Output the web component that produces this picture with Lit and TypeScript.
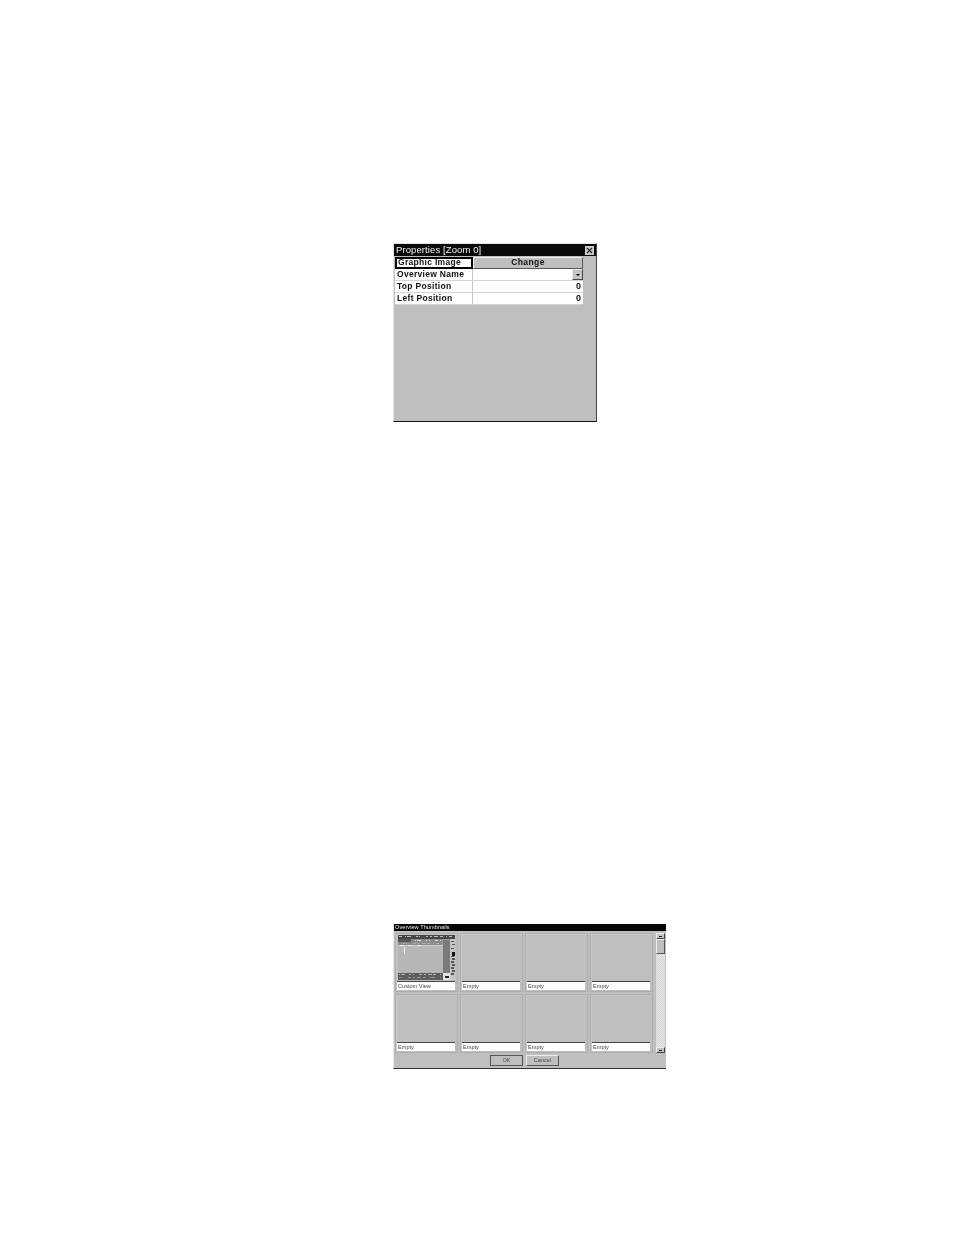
import { LitElement, html, css, svg } from "lit";
import { customElement } from "lit/decorators.js";

const noise = (y: number, x0: number, x1: number, h: number, c: string, seed: number) => {
  const out = [];
  let x = x0, i = seed;
  while (x < x1) {
    const w = 1 + ((i * 7) % 4);
    if (i % 3 !== 0) out.push(svg`<rect x=${x} y=${y} width=${Math.min(w, x1 - x)} height=${h} fill=${c}/>`);
    x += w + ((i * 5) % 3) * 0.5 + 0.5;
    i++;
  }
  return out;
};

@customElement("app-root")
export class AppRoot extends LitElement {
  static styles = css`
    :host { display: block; width: 954px; height: 1235px; background: #fff; overflow: hidden; font-family: "Liberation Sans", Arial, sans-serif; color: #111; }
    .page { display: flex; flex-direction: column; padding: 243px 0 0 393px; }

    .props { box-sizing: border-box; width: 204px; height: 179px; background: #bfbfbf; border-left: 1px solid #e4e4e4; border-top: 1px solid #e4e4e4; border-right: 1px solid #444; border-bottom: 1px solid #111; display: flex; flex-direction: column; filter: blur(0.3px); }
    .props .title { height: 12px; background: #0a0a0a; color: #f2f2f2; font-size: 9.5px; line-height: 12px; padding: 0 0 0 2px; letter-spacing: 0.1px; display: flex; align-items: center; justify-content: space-between; }
    .close { box-sizing: border-box; width: 9px; height: 9px; background: #c8c8c8; margin-right: 2px; display: flex; }
    .close svg { width: 9px; height: 9px; display: block; }
    .table { margin: 1px 0 0 1px; width: 188px; display: flex; flex-direction: column; }
    .row { display: grid; grid-template-columns: 78px 110px; height: 12px; background: #fff; font-size: 8.5px; font-weight: bold; letter-spacing: 0.3px; line-height: 10px; }
    .lab { box-sizing: border-box; padding-left: 2px; border-right: 1px solid #c8c8c8; border-bottom: 1px solid #d4d4d4; white-space: nowrap; }
    .val { box-sizing: border-box; border-bottom: 1px solid #d4d4d4; text-align: right; padding-right: 2px; font-size: 9px; letter-spacing: 0; display: flex; justify-content: flex-end; }
    .lab.sel { border: 2px solid #000; line-height: 7px; padding-left: 1px; }
    .btn { background: #bfbfbf; border-top: 1px solid #eee; border-left: 1px solid #eee; border-right: 1px solid #555; border-bottom: 1px solid #555; text-align: center; padding: 0; justify-content: center; font-size: 8.5px; letter-spacing: 0.4px; line-height: 9px; }
    .drop { box-sizing: border-box; width: 11px; height: 11px; margin-right: -2px; background: #c4c4c4; border-top: 1px solid #eee; border-left: 1px solid #eee; border-right: 1px solid #444; border-bottom: 1px solid #444; display: flex; align-items: center; justify-content: center; }
    .drop::after { content: ""; border-left: 2.5px solid transparent; border-right: 2.5px solid transparent; border-top: 2.5px solid #000; }

    .thumbs { box-sizing: border-box; margin-top: 502px; width: 273px; height: 145px; background: #bfbfbf; border-left: 1px solid #e8e8e8; border-bottom: 1px solid #333; display: flex; flex-direction: column; filter: blur(0.35px); }
    .thumbs .title { height: 7px; background: #060606; color: #eee; font-size: 5.6px; line-height: 7px; padding-left: 1px; letter-spacing: 0.05px; white-space: nowrap; }
    .body { display: flex; margin: 2px 0 0 1px; gap: 2px; }
    .grid { display: grid; grid-template-columns: repeat(4, 63px); grid-auto-rows: 59px; column-gap: 2px; row-gap: 2px; width: 258px; }
    .cell { box-sizing: border-box; border: 1px solid #adadad; padding: 1px; display: flex; flex-direction: column; justify-content: flex-end; box-shadow: inset 1px 1px 0 #c8c8c8; }
    .shot { display: block; width: 59px; height: 46px; margin-bottom: 1px; }
    .name { box-sizing: border-box; height: 9px; width: 58px; align-self: flex-start; margin-left: 0; background: #fff; border-top: 1px solid #444; font-size: 5.6px; line-height: 8px; color: #444; padding-left: 1px; white-space: nowrap; }
    .scroll { box-sizing: border-box; width: 9px; height: 120px; display: flex; flex-direction: column; background-color: #ddd; background-image: repeating-conic-gradient(#d2d2d2 0 25%, #e8e8e8 0 50%); background-size: 2px 2px; margin-left: 1px; }
    .sb { box-sizing: border-box; width: 9px; height: 6px; background: #c4c4c4; border-top: 1px solid #eee; border-left: 1px solid #eee; border-right: 1px solid #444; border-bottom: 1px solid #444; display: flex; align-items: center; justify-content: center; }
    .sb::after { content: ""; width: 3px; height: 1px; background: #111; }
    .thumb { box-sizing: border-box; width: 9px; height: 15px; background: #bfbfbf; border-top: 1px solid #eee; border-left: 1px solid #eee; border-right: 1px solid #555; border-bottom: 1px solid #555; }
    .spacer { flex: 1; }
    .actions { display: flex; justify-content: flex-start; gap: 3px; margin: 2px 0 0 96px; }
    .b { box-sizing: border-box; width: 33px; height: 11px; background: #bfbfbf; font-size: 5.6px; line-height: 9px; text-align: center; color: #444; border-top: 1px solid #eee; border-left: 1px solid #eee; border-right: 1px solid #555; border-bottom: 1px solid #555; }
    .b.ok { outline: 1px solid #555; outline-offset: -1px; }
  `;

  private shot() {
    return html`<svg class="shot" viewBox="0 0 59 46" shape-rendering="crispEdges">
      <rect width="59" height="46" fill="#9a9a9a"/>
      <rect y="0" width="59" height="4" fill="#444"/>
      ${noise(1, 1, 57, 1, "#bdbdbd", 2)}
      <rect y="4" width="45" height="6" fill="#8a8a8a"/>
      <rect x="0" y="4" width="14" height="3" fill="#555"/>
      ${noise(5, 15, 44, 1, "#d8d8d8", 3)}
      ${noise(8, 2, 42, 1, "#b0b0b0", 6)}
      <rect x="0" y="10" width="46" height="1" fill="#cfcfcf"/>
      ${noise(10, 2, 24, 1, "#f4f4f4", 5)}
      <rect x="0" y="11" width="46" height="28" fill="#b6b6b6"/>
      <rect x="7" y="12" width="1" height="7" fill="#f4f4f4"/>
      <rect x="46" y="5" width="8" height="34" fill="#7a7a7a"/>
      <rect x="54" y="4" width="5" height="42" fill="#c6c6c6"/>
      ${[6, 9, 13, 17, 21, 24, 27, 30, 33, 36, 39].map((y, i) => svg`<rect x=${54.5 + (i % 2)} y=${y} width="3" height=${i === 3 ? 4 : 1.5} fill=${i === 3 ? "#111" : "#555"}/>`)}
      <rect x="0" y="39" width="46" height="7" fill="#5c5c5c"/>
      ${noise(40, 1, 44, 1, "#b8b8b8", 4)}
      ${noise(43, 1, 44, 1, "#9a9a9a", 7)}
      <rect x="46" y="39" width="8" height="7" fill="#e4e4e4"/>
      <rect x="48" y="42" width="4" height="2" fill="#222"/>
    </svg>`;
  }

  render() {
    const names = ["Custom View", "Empty", "Empty", "Empty", "Empty", "Empty", "Empty", "Empty"];
    return html`<div class="page">
      <section class="props">
        <div class="title"><span>Properties [Zoom 0]</span>
          <span class="close"><svg viewBox="0 0 9 9"><path d="M2 2 7 7M7 2 2 7" stroke="#222" stroke-width="1.1"/></svg></span>
        </div>
        <div class="table">
          <div class="row"><div class="lab sel">Graphic Image</div><div class="val btn">Change</div></div>
          <div class="row"><div class="lab">Overview Name</div><div class="val"><span class="drop"></span></div></div>
          <div class="row"><div class="lab">Top Position</div><div class="val">0</div></div>
          <div class="row"><div class="lab">Left Position</div><div class="val">0</div></div>
        </div>
      </section>

      <section class="thumbs">
        <div class="title">Overview Thumbnails</div>
        <div class="body">
          <div class="grid">
            ${names.map((n, i) => html`<div class="cell">${i === 0 ? this.shot() : ""}<div class="name">${n}</div></div>`)}
          </div>
          <div class="scroll"><div class="sb"></div><div class="thumb"></div><div class="spacer"></div><div class="sb"></div></div>
        </div>
        <div class="actions"><div class="b ok">OK</div><div class="b">Cancel</div></div>
      </section>
    </div>`;
  }
}
